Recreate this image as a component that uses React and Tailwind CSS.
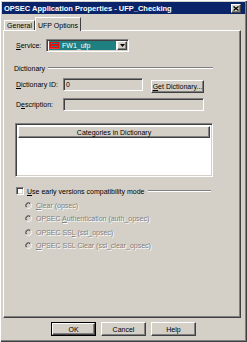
import React from "react";

const sunken = "border border-t-[#808080] border-l-[#808080] border-b-white border-r-white shadow-[inset_1px_1px_0_#404040,inset_-1px_-1px_0_#d4d0c8]";
const raised = "border border-t-white border-l-white border-b-[#404040] border-r-[#404040] shadow-[inset_-1px_-1px_0_#808080]";
const dis = "text-[#808080] [text-shadow:1px_1px_0_#ffffff]";

function Btn({ children, def, className = "" }) {
  if (def) {
    return (
      <div className={"border border-black " + className}>
        <div className={raised + " h-full bg-[#d4d0c8] flex items-center justify-center"}>{children}</div>
      </div>
    );
  }
  return <div className={raised + " bg-[#d4d0c8] flex items-center justify-center " + className}>{children}</div>;
}

function Radio({ children }) {
  return (
    <div className="flex items-center h-[10px] ml-[9px]">
      <svg width="7" height="7" viewBox="0 0 8 8" className="mr-[4px]">
        <circle cx="4" cy="4" r="3.5" fill="#d4d0c8" />
        <path d="M6.5 1.5 A3.5 3.5 0 0 0 1.5 6.5" fill="none" stroke="#808080" strokeWidth="1" />
        <path d="M6 2 A2.8 2.8 0 0 0 2 6" fill="none" stroke="#404040" strokeWidth="1" />
        <path d="M1.5 6.5 A3.5 3.5 0 0 0 6.5 1.5" fill="none" stroke="#ffffff" strokeWidth="1" />
      </svg>
      <span className={dis + " whitespace-nowrap"}>{children}</span>
    </div>
  );
}

export default function App() {
  return (
    <div className="w-[247px] h-[342px] bg-[#d4d0c8] p-[2px] flex flex-col text-[7px] leading-[9px] text-black font-['Liberation_Sans',Arial,sans-serif] shadow-[inset_1px_1px_0_#ffffff,inset_-1px_-1px_0_#404040,inset_-2px_-2px_0_#808080] overflow-hidden">
      {/* Title bar */}
      <div className="h-[12px] bg-[#0a246a] flex items-center justify-between pl-[2px] pr-[4px]">
        <span className="text-white font-bold text-[7.5px] whitespace-nowrap">OPSEC Application Properties - UFP_Checking</span>
        <div className={raised + " w-[10px] h-[9px] bg-[#d4d0c8] flex items-center justify-center"}>
          <svg width="6" height="5" viewBox="0 0 6 5">
            <path d="M0.5 0.5 L5.5 4.5 M5.5 0.5 L0.5 4.5" stroke="#000" strokeWidth="1.3" />
          </svg>
        </div>
      </div>

      {/* Tabs */}
      <div className="flex items-end mt-[3px] ml-[2px] h-[13px]">
        <div className="h-[10px] w-[31px] border-l border-t border-white border-r border-r-[#404040] rounded-tl-[1px] flex items-center justify-center">
          <span className="whitespace-nowrap">General</span>
        </div>
        <div className="relative z-10 -mb-[1px] h-[14px] w-[46px] bg-[#d4d0c8] border-l border-t border-white border-r border-r-[#404040] rounded-tl-[1px] flex items-start justify-center pt-[3px]">
          <span className="whitespace-nowrap">UFP Options</span>
        </div>
      </div>

      {/* Panel */}
      <div className={raised + " ml-[1px] w-[238px] h-[288px] flex flex-col pl-[12px]"}>
        {/* Service */}
        <div className="flex items-center h-[13px] mt-[8px]">
          <span className="w-[30px]"><u>S</u>ervice:</span>
          <div className={sunken + " w-[83px] h-[13px] bg-white flex items-center p-[1px]"}>
            <div className="flex-1 h-full flex items-center pl-[1px]">
              <div className="h-full flex-1 bg-[#1e8080] flex items-center pl-[1px]">
                <svg width="9" height="7" viewBox="0 0 9 7" className="mr-[3px]">
                  <rect x="0.5" y="0.5" width="8" height="2" fill="none" stroke="#e01010" />
                  <rect x="0.5" y="3.5" width="8" height="2" fill="none" stroke="#e01010" />
                  <line x1="0" y1="6.5" x2="9" y2="6.5" stroke="#ff3030" />
                </svg>
                <span className="text-white whitespace-nowrap">FW1_ufp</span>
              </div>
            </div>
            <div className={raised + " w-[10px] h-full bg-[#d4d0c8] flex items-center justify-center ml-[1px]"}>
              <svg width="5" height="3" viewBox="0 0 5 3"><path d="M0 0 H5 L2.5 3 Z" fill="#000" /></svg>
            </div>
          </div>
        </div>

        {/* Dictionary group */}
        <div className="flex items-center h-[10px] mt-[11px] -ml-[2px] w-[199px]">
          <span className="whitespace-nowrap mr-[3px]">Dictionary</span>
          <div className="flex-1 border-t border-t-[#808080] border-b border-b-white" />
        </div>

        {/* Dictionary ID */}
        <div className="flex items-start h-[15px] mt-[5px]">
          <span className="w-[47px] mt-[2px] whitespace-nowrap"><u>D</u>ictionary ID:</span>
          <div className={sunken + " w-[80px] h-[13px] bg-[#d4d0c8] flex items-center pl-[2px]"}>
            <span>0</span>
          </div>
          <Btn className="ml-[8px] mt-[2px] w-[53px] h-[13px]"><span className="whitespace-nowrap"><u>G</u>et Dictionary...</span></Btn>
        </div>

        {/* Description */}
        <div className="flex items-center h-[13px] mt-[5px]">
          <span className="w-[47px] whitespace-nowrap">D<u>e</u>scription:</span>
          <div className={sunken + " w-[141px] h-[13px] bg-[#d4d0c8]"} />
        </div>

        {/* List */}
        <div className={sunken + " -ml-[1px] mt-[12px] w-[198px] h-[54px] bg-white flex flex-col p-[2px] pb-[1px]"}>
          <div className={raised + " h-[12px] bg-[#d4d0c8] flex items-center justify-center"}>
            <span className="whitespace-nowrap">Categories in Dictionary</span>
          </div>
        </div>

        {/* Checkbox */}
        <div className="flex items-center h-[10px] mt-[9px] w-[195px]">
          <div className={sunken + " w-[8px] h-[8px] bg-white mr-[3px]"} />
          <span className="whitespace-nowrap mr-[3px]"><u>U</u>se early versions compatibility mode</span>
          <div className="flex-1 border-t border-t-[#808080] border-b border-b-white" />
        </div>

        {/* Radios */}
        <div className="flex flex-col gap-[3.5px] mt-[4px]">
          <Radio><u>C</u>lear (opsec)</Radio>
          <Radio>OPSEC <u>A</u>uthentication (auth_opsec)</Radio>
          <Radio>OPSEC SS<u>L</u> (ssl_opsec)</Radio>
          <Radio><u>O</u>PSEC SSL Clear (ssl_clear_opsec)</Radio>
        </div>
      </div>

      {/* Buttons */}
      <div className="flex mt-[4px] ml-[49px] gap-[5px]">
        <Btn def className="w-[45px] h-[14px]">OK</Btn>
        <Btn className="w-[45px] h-[14px]">Cancel</Btn>
        <Btn className="w-[45px] h-[14px]">Help</Btn>
      </div>
    </div>
  );
}
